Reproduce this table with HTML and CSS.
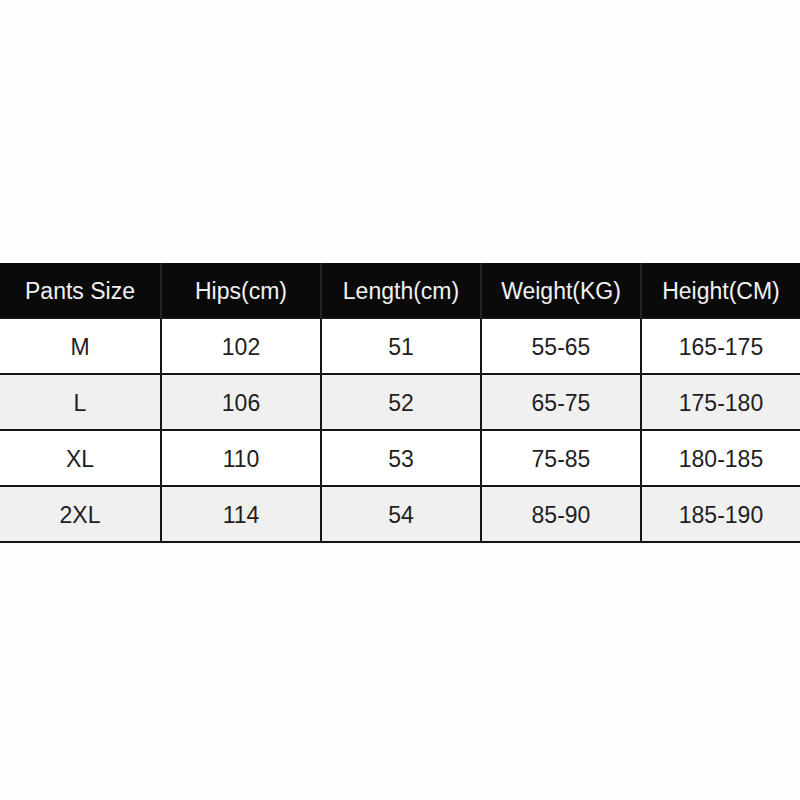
FILE: index.html
```html
<!DOCTYPE html>
<html>
<head>
<meta charset="utf-8">
<link rel="stylesheet" href="styles.css">
</head>
<body>
<div class="page">
  <div class="table">
    <div class="cell head first">Pants Size</div>
    <div class="cell head">Hips(cm)</div>
    <div class="cell head">Length(cm)</div>
    <div class="cell head">Weight(KG)</div>
    <div class="cell head">Height(CM)</div>

    <div class="cell first">M</div>
    <div class="cell">102</div>
    <div class="cell">51</div>
    <div class="cell">55-65</div>
    <div class="cell">165-175</div>

    <div class="cell alt first">L</div>
    <div class="cell alt">106</div>
    <div class="cell alt">52</div>
    <div class="cell alt">65-75</div>
    <div class="cell alt">175-180</div>

    <div class="cell first">XL</div>
    <div class="cell">110</div>
    <div class="cell">53</div>
    <div class="cell">75-85</div>
    <div class="cell">180-185</div>

    <div class="cell alt first">2XL</div>
    <div class="cell alt">114</div>
    <div class="cell alt">54</div>
    <div class="cell alt">85-90</div>
    <div class="cell alt">185-190</div>
  </div>
</div>
</body>
</html>
```

FILE: styles.css
```css
html, body {
  margin: 0;
  padding: 0;
  background: #fdfdfd;
}
.page {
  width: 800px;
  height: 800px;
  padding-top: 263px;
  box-sizing: border-box;
}
.table {
  display: grid;
  grid-template-columns: repeat(5, 160px);
  grid-auto-rows: 56px;
  font-family: "Liberation Sans", Arial, sans-serif;
}
.cell {
  box-sizing: border-box;
  display: flex;
  align-items: center;
  justify-content: center;
  border-left: 2px solid #141414;
  border-bottom: 2px solid #141414;
  background: #ffffff;
  color: #1e1e1e;
  font-size: 23px;
  padding-top: 3px;
}
.cell.first {
  border-left: none;
}
.cell.alt {
  background: #f0f0f0;
}
.cell.head {
  background: #0a0a0a;
  color: #f2f2f2;
  font-size: 23px;
  border-left-color: #222;
  padding-top: 2px;
}
.cell.head.first {
  border-left: none;
}
```
